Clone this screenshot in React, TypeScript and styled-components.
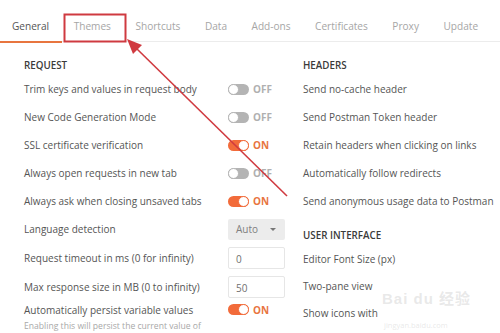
import React from 'react'
import styled, { createGlobalStyle } from 'styled-components'

const GlobalStyle = createGlobalStyle`
    html, body {
        margin: 0;
        padding: 0;
        background: #fff;
    }
    body {
        font-family: 'Open Sans', 'Noto Sans', 'Noto Sans CJK SC', sans-serif;
        color: #555;
    }
`

const Page = styled.div`
    position: relative;
    width: 500px;
    height: 333px;
    overflow: hidden;
    background: #fff;
`

const TabBar = styled.div`
    display: flex;
    height: 42px;
    border-bottom: 1px solid #ececec;
    box-sizing: border-box;
    padding-top: 12px;
`

const Tab = styled.div<{ active?: boolean }>`
    position: relative;
    padding: 0 12.5px 0 12px;
    height: 30px;
    line-height: 28px;
    font-size: 10.1px;
    color: ${({ active }) => (active ? '#555' : '#a6a6a6')};
    &::after {
        content: '';
        position: absolute;
        left: 0;
        right: 0;
        bottom: -1px;
        height: 2px;
        background: ${({ active }) => (active ? '#e8753f' : 'transparent')};
    }
`

const Content = styled.div`
    display: grid;
    grid-template-columns: 261px 1fr;
    column-gap: 18px;
    padding: 14px 0 0 24px;
`

const Column = styled.div`
    display: flex;
    flex-direction: column;
`

const SectionTitle = styled.div<{ spaced?: boolean }>`
    height: 19px;
    line-height: 20px;
    font-size: 9.8px;
    font-weight: 600;
    color: #3a3a3a;
    margin-top: ${({ spaced }) => (spaced ? '11px' : '0')};
    margin-bottom: ${({ spaced }) => (spaced ? '1px' : '0')};
`

const Row = styled.div<{ h?: number }>`
    display: grid;
    grid-template-columns: 204px 57px;
    align-items: center;
    height: ${({ h }) => h || 28}px;
    font-size: 10px;
    color: #555;
    white-space: nowrap;
`

const Label = styled.div`
    overflow: visible;
`

const ToggleWrap = styled.div`
    display: flex;
    align-items: center;
    gap: 4px;
`

const Track = styled.div<{ on: boolean }>`
    position: relative;
    width: 21px;
    height: 11px;
    border-radius: 6px;
    background: ${({ on }) => (on ? '#f26b3a' : '#b4b4b4')};
    &::after {
        content: '';
        position: absolute;
        top: 0;
        left: ${({ on }) => (on ? '10px' : '0')};
        width: 9px;
        height: 9px;
        border-radius: 50%;
        background: #fff;
        border: 1px solid ${({ on }) => (on ? '#f26b3a' : '#b4b4b4')};
    }
`

const ToggleText = styled.span<{ on: boolean }>`
    font-size: 10px;
    font-weight: 700;
    color: ${({ on }) => (on ? '#e8753f' : '#b0b0b0')};
`

const Select = styled.div`
    display: flex;
    align-items: center;
    justify-content: space-between;
    height: 21px;
    padding: 0 9px 0 8px;
    background: #ececec;
    border-radius: 2px;
    font-size: 10px;
    color: #808080;
`

const Caret = styled.span`
    width: 0;
    height: 0;
    border-left: 3px solid transparent;
    border-right: 3px solid transparent;
    border-top: 3.5px solid #777;
`

const Input = styled.div`
    height: 22px;
    line-height: 22px;
    box-sizing: border-box;
    padding: 0 7px;
    border: 1px solid #e6e6e6;
    border-radius: 2px;
    font-size: 10px;
    color: #707070;
`

const Hint = styled.div`
    font-size: 8.6px;
    color: #a8a8a8;
    line-height: 16px;
    white-space: nowrap;
`

const RightRow = styled.div<{ h?: number }>`
    display: flex;
    align-items: center;
    height: ${({ h }) => h || 28}px;
    font-size: 10px;
    color: #555;
    white-space: nowrap;
`

const Annotation = styled.svg`
    position: absolute;
    left: 0;
    top: 0;
    pointer-events: none;
`

const Watermark = styled.div`
    position: absolute;
    left: 382px;
    top: 287px;
    color: rgba(205, 205, 205, 0.45);
    pointer-events: none;
`

const WatermarkLogo = styled.span`
    font-family: 'Liberation Sans', 'Noto Sans CJK SC', sans-serif;
    font-size: 15px;
    font-weight: 700;
    letter-spacing: 1px;
`

const WatermarkSub = styled.span`
    font-size: 7.5px;
`

function Toggle({ on }: { on: boolean }) {
    return (
        <ToggleWrap>
            <Track on={on} />
            <ToggleText on={on}>{on ? 'ON' : 'OFF'}</ToggleText>
        </ToggleWrap>
    )
}

const tabs = [
    'General',
    'Themes',
    'Shortcuts',
    'Data',
    'Add-ons',
    'Certificates',
    'Proxy',
    'Update',
]

export default function App() {
    return (
        <Page>
            <GlobalStyle />
            <TabBar>
                {tabs.map((t, i) => (
                    <Tab key={t} active={i === 0}>
                        {t}
                    </Tab>
                ))}
            </TabBar>
            <Content>
                <Column>
                    <SectionTitle>REQUEST</SectionTitle>
                    <Row>
                        <Label>Trim keys and values in request body</Label>
                        <Toggle on={false} />
                    </Row>
                    <Row>
                        <Label>New Code Generation Mode</Label>
                        <Toggle on={false} />
                    </Row>
                    <Row>
                        <Label>SSL certificate verification</Label>
                        <Toggle on />
                    </Row>
                    <Row>
                        <Label>Always open requests in new tab</Label>
                        <Toggle on={false} />
                    </Row>
                    <Row>
                        <Label>Always ask when closing unsaved tabs</Label>
                        <Toggle on />
                    </Row>
                    <Row>
                        <Label>Language detection</Label>
                        <Select>
                            Auto
                            <Caret />
                        </Select>
                    </Row>
                    <Row h={29}>
                        <Label>Request timeout in ms (0 for infinity)</Label>
                        <Input>0</Input>
                    </Row>
                    <Row h={29}>
                        <Label>Max response size in MB (0 to infinity)</Label>
                        <Input>50</Input>
                    </Row>
                    <Row h={17}>
                        <Label>Automatically persist variable values</Label>
                        <Toggle on />
                    </Row>
                    <Hint>Enabling this will persist the current value of</Hint>
                </Column>
                <Column>
                    <SectionTitle>HEADERS</SectionTitle>
                    <RightRow>Send no-cache header</RightRow>
                    <RightRow>Send Postman Token header</RightRow>
                    <RightRow>Retain headers when clicking on links</RightRow>
                    <RightRow>Automatically follow redirects</RightRow>
                    <RightRow>Send anonymous usage data to Postman</RightRow>
                    <SectionTitle spaced>USER INTERFACE</SectionTitle>
                    <RightRow h={26}>Editor Font Size (px)</RightRow>
                    <RightRow>Two-pane view</RightRow>
                    <RightRow h={26}>Show icons with</RightRow>
                </Column>
            </Content>
            <Watermark>
                <WatermarkLogo>Bai du 经验</WatermarkLogo>
            </Watermark>
            <Watermark style={{ left: 384, top: 311 }}>
                <WatermarkSub>jingyan.baidu.com</WatermarkSub>
            </Watermark>
            <Annotation width="500" height="333" viewBox="0 0 500 333">
                <rect
                    x="64.5"
                    y="14.5"
                    width="61"
                    height="27"
                    fill="none"
                    stroke="#cf3a40"
                    strokeWidth="2"
                />
                <line
                    x1="287"
                    y1="196"
                    x2="136"
                    y2="48"
                    stroke="#d03a40"
                    strokeWidth="1.6"
                />
                <polygon points="127,39 142,45 133,54" fill="#d03a40" />
            </Annotation>
        </Page>
    )
}
